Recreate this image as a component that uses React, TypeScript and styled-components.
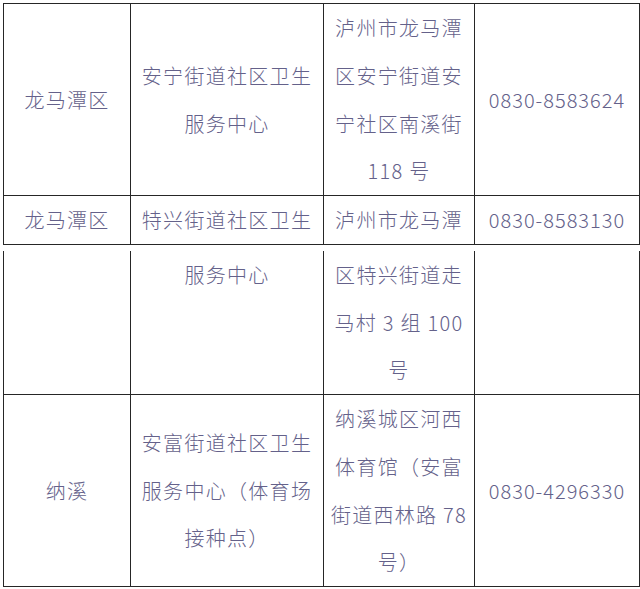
import React from "react";
import styled, { createGlobalStyle } from "styled-components";

const Global = createGlobalStyle`
  html, body { margin: 0; padding: 0; background: #ffffff; }
  body { font-family: "Noto Sans CJK SC", "Noto Sans", sans-serif; }
`;

const Page = styled.div`
  padding: 3px 2px 0 3px;
  display: flex;
  flex-direction: column;
  gap: 6px;
`;

const Table = styled.table<{ $noTop?: boolean }>`
  width: 636px;
  border-collapse: collapse;
  table-layout: fixed;
  ${(p) => (p.$noTop ? "border-top: hidden;" : "")}
`;

const Cell = styled.td<{ $top?: boolean; $phone?: boolean }>`
  border: 1px solid #262626;
  padding: 0;
  text-align: center;
  vertical-align: ${(p) => (p.$top ? "top" : "middle")};
  font-size: 20px;
  font-weight: 300;
  line-height: 47.75px;
  color: #64618a;
  letter-spacing: ${(p) => (p.$phone ? "1px" : "1.3px")};
  white-space: nowrap;
`;

const Line = styled.div`
  display: block;
`;

type Row = {
  district: string;
  center: string[];
  address: string[];
  phone: string;
  top?: boolean;
};

const Cols = () => (
  <colgroup>
    <col style={{ width: 127 }} />
    <col style={{ width: 193 }} />
    <col style={{ width: 151 }} />
    <col style={{ width: 165 }} />
  </colgroup>
);

const RowView = ({ r }: { r: Row }) => (
  <tr>
    <Cell $top={r.top}>{r.district}</Cell>
    <Cell $top={r.top}>
      {r.center.map((l, i) => (
        <Line key={i}>{l}</Line>
      ))}
    </Cell>
    <Cell $top={r.top}>
      {r.address.map((l, i) => (
        <Line key={i}>{l}</Line>
      ))}
    </Cell>
    <Cell $top={r.top} $phone>
      {r.phone}
    </Cell>
  </tr>
);

const first: Row[] = [
  {
    district: "龙马潭区",
    center: ["安宁街道社区卫生", "服务中心"],
    address: ["泸州市龙马潭", "区安宁街道安", "宁社区南溪街", "118 号"],
    phone: "0830-8583624",
  },
  {
    district: "龙马潭区",
    center: ["特兴街道社区卫生"],
    address: ["泸州市龙马潭"],
    phone: "0830-8583130",
  },
];

const second: Row[] = [
  {
    district: "",
    center: ["服务中心"],
    address: ["区特兴街道走", "马村 3 组 100", "号"],
    phone: "",
    top: true,
  },
  {
    district: "纳溪",
    center: ["安富街道社区卫生", "服务中心（体育场", "接种点）"],
    address: ["纳溪城区河西", "体育馆（安富", "街道西林路 78", "号）"],
    phone: "0830-4296330",
  },
];

export default function App() {
  return (
    <>
      <Global />
      <Page>
        <Table>
          <Cols />
          <tbody>
            {first.map((r, i) => (
              <RowView key={i} r={r} />
            ))}
          </tbody>
        </Table>
        <Table $noTop>
          <Cols />
          <tbody>
            {second.map((r, i) => (
              <RowView key={i} r={r} />
            ))}
          </tbody>
        </Table>
      </Page>
    </>
  );
}
